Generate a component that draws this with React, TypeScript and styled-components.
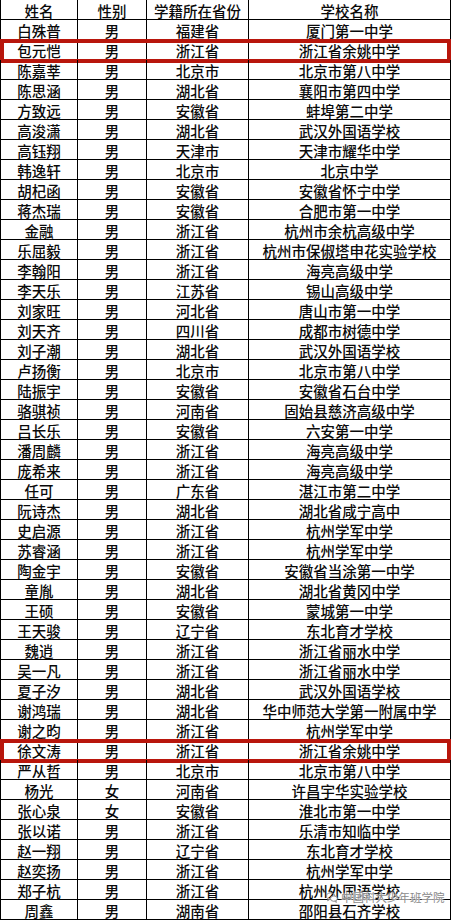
import React from "react";
import styled, { createGlobalStyle } from "styled-components";

const GlobalStyle = createGlobalStyle`
  html, body {
    margin: 0;
    padding: 0;
    background: #fff;
  }
  body {
    font-family: "Noto Sans CJK SC", "Noto Sans", sans-serif;
  }
`;

const Sheet = styled.div`
  position: relative;
  width: 451px;
  display: flex;
  flex-direction: column;
  background: #fff;
`;

const Row = styled.div`
  position: relative;
  display: flex;
  height: 20px;
  box-sizing: border-box;
  border-left: 1px solid #000;
  border-bottom: 1px solid #000;
`;

const Cell = styled.div<{ $w: number }>`
  width: ${(p) => p.$w}px;
  flex: none;
  box-sizing: border-box;
  border-right: 1px solid #000;
  display: flex;
  align-items: center;
  justify-content: center;
  padding-top: 2px;
  font-size: 14.5px;
  font-weight: 500;
  line-height: 17px;
  color: #0a0a0a;
  white-space: nowrap;
`;

const Highlight = styled.div`
  position: absolute;
  left: -1px;
  right: 0;
  top: -1px;
  height: 24px;
  box-sizing: border-box;
  border: 4px solid #b8160c;
  pointer-events: none;
`;

const Watermark = styled.div`
  position: absolute;
  left: 326px;
  top: 891px;
  display: flex;
  align-items: center;
  gap: 3px;
  font-size: 11.5px;
  line-height: 13px;
  color: #8a8a8a;
  text-shadow: 0 0 1px #fff, 0 0 2px #fff, 0 0 2px #fff;
  white-space: nowrap;
`;

const widths = [77, 69, 102, 202];

type Student = [string, string, string, string];

const header: Student = ["姓名", "性别", "学籍所在省份", "学校名称"];

const students: Student[] = [
  ["白殊普", "男", "福建省", "厦门第一中学"],
  ["包元恺", "男", "浙江省", "浙江省余姚中学"],
  ["陈嘉莘", "男", "北京市", "北京市第八中学"],
  ["陈思涵", "男", "湖北省", "襄阳市第四中学"],
  ["方致远", "男", "安徽省", "蚌埠第二中学"],
  ["高浚潇", "男", "湖北省", "武汉外国语学校"],
  ["高钰翔", "男", "天津市", "天津市耀华中学"],
  ["韩逸轩", "男", "北京市", "北京中学"],
  ["胡杞函", "男", "安徽省", "安徽省怀宁中学"],
  ["蒋杰瑞", "男", "安徽省", "合肥市第一中学"],
  ["金融", "男", "浙江省", "杭州市余杭高级中学"],
  ["乐屈毅", "男", "浙江省", "杭州市保俶塔申花实验学校"],
  ["李翰阳", "男", "浙江省", "海亮高级中学"],
  ["李天乐", "男", "江苏省", "锡山高级中学"],
  ["刘家旺", "男", "河北省", "唐山市第一中学"],
  ["刘天齐", "男", "四川省", "成都市树德中学"],
  ["刘子潮", "男", "湖北省", "武汉外国语学校"],
  ["卢扬衡", "男", "北京市", "北京市第八中学"],
  ["陆振宇", "男", "安徽省", "安徽省石台中学"],
  ["骆骐祯", "男", "河南省", "固始县慈济高级中学"],
  ["吕长乐", "男", "安徽省", "六安第一中学"],
  ["潘周麟", "男", "浙江省", "海亮高级中学"],
  ["庞希来", "男", "浙江省", "海亮高级中学"],
  ["任可", "男", "广东省", "湛江市第二中学"],
  ["阮诗杰", "男", "湖北省", "湖北省咸宁高中"],
  ["史启源", "男", "浙江省", "杭州学军中学"],
  ["苏睿涵", "男", "浙江省", "杭州学军中学"],
  ["陶金宇", "男", "安徽省", "安徽省当涂第一中学"],
  ["童胤", "男", "湖北省", "湖北省黄冈中学"],
  ["王硕", "男", "安徽省", "蒙城第一中学"],
  ["王天骏", "男", "辽宁省", "东北育才学校"],
  ["魏逍", "男", "浙江省", "浙江省丽水中学"],
  ["吴一凡", "男", "浙江省", "浙江省丽水中学"],
  ["夏子汐", "男", "湖北省", "武汉外国语学校"],
  ["谢鸿瑞", "男", "湖北省", "华中师范大学第一附属中学"],
  ["谢之昀", "男", "浙江省", "杭州学军中学"],
  ["徐文涛", "男", "浙江省", "浙江省余姚中学"],
  ["严从哲", "男", "北京市", "北京市第八中学"],
  ["杨光", "女", "河南省", "许昌宇华实验学校"],
  ["张心泉", "女", "安徽省", "淮北市第一中学"],
  ["张以诺", "男", "浙江省", "乐清市知临中学"],
  ["赵一翔", "男", "辽宁省", "东北育才学校"],
  ["赵奕扬", "男", "浙江省", "杭州学军中学"],
  ["郑子杭", "男", "浙江省", "杭州外国语学校"],
  ["周鑫", "男", "湖南省", "邵阳县石齐学校"],
];

// rows circled in red in the original picture
const marked = new Set(["包元恺", "徐文涛"]);

function WechatIcon() {
  return (
    <svg width="12" height="11" viewBox="0 0 22 20" fill="none" stroke="#8a8a8a" strokeWidth="1.8">
      <ellipse cx="8.5" cy="7.5" rx="7.5" ry="6" />
      <path d="M4 12.5 L3 16 L7 13.5" />
      <ellipse cx="14.5" cy="12" rx="6.2" ry="5" fill="#fff" />
      <path d="M18 16 L19 19 L16 16.8" />
    </svg>
  );
}

export default function App() {
  return (
    <>
      <GlobalStyle />
      <Sheet>
        <Row>
          {header.map((h, i) => (
            <Cell key={i} $w={widths[i]}>{h}</Cell>
          ))}
        </Row>
        {students.map((s) => (
          <Row key={s[0]}>
            {s.map((v, i) => (
              <Cell key={i} $w={widths[i]}>{v}</Cell>
            ))}
            {marked.has(s[0]) && <Highlight />}
          </Row>
        ))}
        <Watermark>
          <WechatIcon />
          <span>中国科大少年班学院</span>
        </Watermark>
      </Sheet>
    </>
  );
}
